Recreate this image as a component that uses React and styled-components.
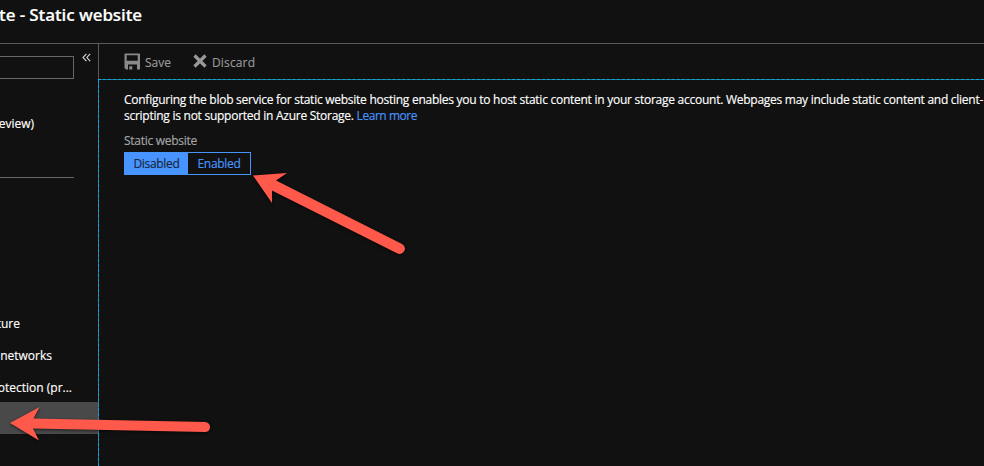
import React from "react";
import styled, { createGlobalStyle } from "styled-components";

const GlobalStyle = createGlobalStyle`
  * { box-sizing: border-box; }
  body { margin: 0; background: #111; overflow: hidden; }
`;

const Page = styled.div`
  position: relative;
  width: 984px;
  height: 466px;
  overflow: hidden;
  display: flex;
  flex-direction: column;
  background: #111;
  color: #fff;
  font: 12px/16px "Open Sans", "Noto Sans", sans-serif;
  white-space: nowrap;
  -webkit-text-stroke: 0.15px currentColor;
`;

const Header = styled.header`
  height: 44px;
  flex: none;
  border-bottom: 1px solid #5a5a5a;
`;

const Title = styled.h1`
  display: flex;
  justify-content: flex-end;
  width: 142px;
  margin: 0;
  padding-top: 4px;
  font-size: 17px;
  line-height: 22px;
  font-weight: 600;
  letter-spacing: -0.1px;
`;

const Body = styled.div`
  flex: 1;
  display: flex;
  min-height: 0;
`;

const Sidebar = styled.aside`
  width: 98px;
  flex: none;
  overflow: hidden;
`;

const SearchRow = styled.div`
  display: flex;
  height: 36px;
  padding-top: 12px;
`;

const SearchBox = styled.div`
  width: 74px;
  height: 23px;
  border: 1px solid #666;
  border-left: 0;
`;

const Collapse = styled.svg`
  width: 9px;
  height: 9px;
  margin: -3px 0 0 8px;
  fill: none;
  stroke: #ddd;
  stroke-width: 1.1;
`;

const MenuItem = styled.div`
  display: flex;
  justify-content: flex-end;
  align-items: center;
  width: ${(p) => p.$end}px;
  height: 32px;
  margin-top: ${(p) => p.$gap || 0}px;
`;

const Divider = styled.div`
  width: 74px;
  height: 1px;
  margin-top: 37px;
  background: #666;
`;

const SelectedItem = styled.div`
  height: 32px;
  margin-top: -2px;
  background: #494949;
`;

const Main = styled.main`
  flex: 1;
  min-width: 0;
  display: flex;
  flex-direction: column;
`;

const Toolbar = styled.div`
  display: flex;
  align-items: center;
  height: 35px;
  padding-left: 25px;
  border-left: 1px solid #5a5a5a;
  color: #999;
`;

const Command = styled.div`
  display: flex;
  align-items: center;
  gap: ${(p) => p.$gap}px;
  width: ${(p) => p.$width}px;
  padding-top: 3px;
  letter-spacing: ${(p) => p.$track}px;

  svg { flex: none; margin-top: -4px; }
`;

const Content = styled.section`
  flex: 1;
  display: grid;
  grid-template: 1px 1fr / 1px 1fr;
`;

const TopEdge = styled.div`
  grid-column: 1 / 3;
  background: #3c6878;
  border-top: 1px dashed #00aee0;
`;

const LeftEdge = styled.div`
  background: #5c6870;
  border-left: 1px dashed #00a9e8;
`;

const Settings = styled.div`
  min-width: 0;
  padding: 12px 0 0 25px;
`;

const Line = styled.div`
  letter-spacing: ${(p) => p.$track}px;
`;

const Link = styled.a`
  color: #4894fe;
  letter-spacing: -0.45px;
`;

const Label = styled.div`
  margin-top: 9px;
  color: #a5a5a5;
  letter-spacing: -0.28px;
`;

const Toggle = styled.div`
  display: flex;
  width: 127px;
  height: 23px;
  margin-top: 3px;
  border: 1px solid #4894fe;
`;

const Option = styled.div`
  width: ${(p) => (p.$active ? 63 : 62)}px;
  line-height: 22px;
  text-align: center;
  letter-spacing: -0.3px;
  background: ${(p) => (p.$active ? "#4894fe" : "transparent")};
  color: ${(p) => (p.$active ? "#17263b" : "#4894fe")};
`;

const Arrows = styled.svg`
  position: absolute;
  inset: 0;
  width: 984px;
  height: 466px;
  fill: #ff594b;
  filter: drop-shadow(0 1px 1.5px rgba(0, 0, 0, 0.65));
`;

export default function App() {
  return (
    <Page>
      <GlobalStyle />
      <Header>
        <Title>te - Static website</Title>
      </Header>
      <Body>
        <Sidebar>
          <SearchRow>
            <SearchBox />
            <Collapse viewBox="0 0 9 9">
              <path d="M4.4.8 1 4.5l3.4 3.7M8.2.8 4.8 4.5l3.4 3.7" />
            </Collapse>
          </SearchRow>
          <MenuItem $end={34} $gap={28}>eview)</MenuItem>
          <Divider />
          <MenuItem $end={20} $gap={130}>ture</MenuItem>
          <MenuItem $end={52}>networks</MenuItem>
          <MenuItem $end={72}>otection (pr...</MenuItem>
          <SelectedItem />
        </Sidebar>
        <Main>
          <Toolbar>
            <Command $gap={4} $width={69} $track={0}>
              <svg width="17" height="17" viewBox="0 0 17 17">
                <path
                  fill="#898989"
                  fillRule="evenodd"
                  d="M1 .5h14.5l.5.5v15.5h-3v-5H4v5H2L.5 15V1zM2.7 2.2v5.6h11V2.2zM5.3 13.3h3v3.2h-3z"
                />
              </svg>
              Save
            </Command>
            <Command $gap={5} $width={80} $track={0.15}>
              <svg width="14" height="14" viewBox="0 0 14 14">
                <path d="M1.5 1.5l11 11M12.5 1.5l-11 11" stroke="#999" strokeWidth="3.2" />
              </svg>
              Discard
            </Command>
          </Toolbar>
          <Content>
            <TopEdge />
            <LeftEdge />
            <Settings>
              <Line $track={-0.26}>
                Configuring the blob service for static website hosting enables you to host static content in your storage account. Webpages may include static content and client-
              </Line>
              <Line $track={-0.26}>
                scripting is not supported in Azure Storage. <Link>Learn more</Link>
              </Line>
              <Label>Static website</Label>
              <Toggle>
                <Option $active>Disabled</Option>
                <Option>Enabled</Option>
              </Toggle>
            </Settings>
          </Content>
        </Main>
      </Body>
      <Arrows viewBox="0 0 984 466">
        <path d="M253 175.5 287 173 276 180.5 402 244Q406 246.5 404.5 250.5 402 255 397.5 253.5L272 190.5V203Z" />
        <path d="M10 423 39.5 407 33.5 418.5 205.5 422Q210 423 210 427 210 431.5 205.5 432L33 428.5 39 440.5Z" />
      </Arrows>
    </Page>
  );
}
